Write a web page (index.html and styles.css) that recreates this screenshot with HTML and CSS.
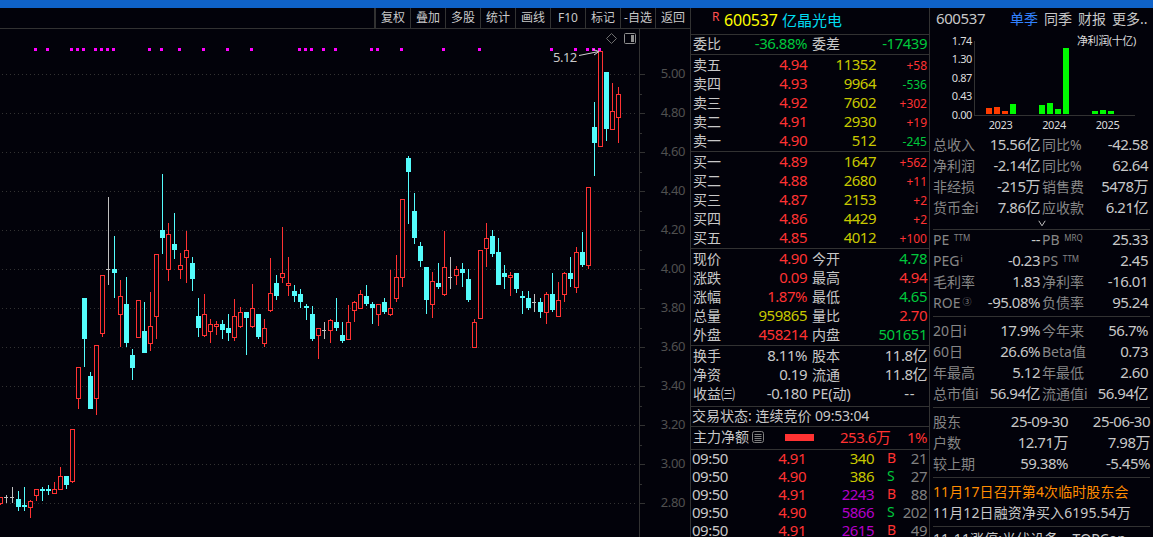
FILE: index.html
```html
<!DOCTYPE html>
<html lang="zh-CN">
<head>
  <meta charset="UTF-8">
  <title>600537 亿晶光电</title>
  <link rel="stylesheet" href="styles.css">
</head>
<body>

  <div class="titlebar"></div>

  <div class="main">

    <!-- K-line area -->
    <div class="kline">
      <div class="toolbar">
        <span>复权</span>
        <span>叠加</span>
        <span>多股</span>
        <span>统计</span>
        <span>画线</span>
        <span>F10</span>
        <span>标记</span>
        <span>-自选</span>
        <span>返回</span>
      </div>
      <svg id="kline-chart" class="kline-chart" width="690" height="508" viewBox="0 29 690 508"></svg>
    </div>

    <!-- Order book and quote -->
    <div class="quote">
      <div class="stock-title"><sup>R</sup><span class="code">600537</span><span class="name">亿晶光电</span></div>

      <div class="block ratio">
        <div class="row"><label>委比</label><b class="green">-36.88%</b><label>委差</label><b class="green">-17439</b></div>
      </div>

      <div class="block sell">
        <div class="row level"><label>卖五</label><b class="red">4.94</b><b class="yellow">11352</b><i class="red">+58</i></div>
        <div class="row level"><label>卖四</label><b class="red">4.93</b><b class="yellow">9964</b><i class="green">-536</i></div>
        <div class="row level"><label>卖三</label><b class="red">4.92</b><b class="yellow">7602</b><i class="red">+302</i></div>
        <div class="row level"><label>卖二</label><b class="red">4.91</b><b class="yellow">2930</b><i class="red">+19</i></div>
        <div class="row level"><label>卖一</label><b class="red">4.90</b><b class="yellow">512</b><i class="green">-245</i></div>
      </div>

      <div class="block buy">
        <div class="row level"><label>买一</label><b class="red">4.89</b><b class="yellow">1647</b><i class="red">+562</i></div>
        <div class="row level"><label>买二</label><b class="red">4.88</b><b class="yellow">2680</b><i class="red">+11</i></div>
        <div class="row level"><label>买三</label><b class="red">4.87</b><b class="yellow">2153</b><i class="red">+2</i></div>
        <div class="row level"><label>买四</label><b class="red">4.86</b><b class="yellow">4429</b><i class="red">+2</i></div>
        <div class="row level"><label>买五</label><b class="red">4.85</b><b class="yellow">4012</b><i class="red">+100</i></div>
      </div>

      <div class="block price">
        <div class="row"><label>现价</label><b class="red">4.90</b><label>今开</label><b class="green">4.78</b></div>
        <div class="row"><label>涨跌</label><b class="red">0.09</b><label>最高</label><b class="red">4.94</b></div>
        <div class="row"><label>涨幅</label><b class="red">1.87%</b><label>最低</label><b class="green">4.65</b></div>
        <div class="row"><label>总量</label><b class="yellow">959865</b><label>量比</label><b class="red">2.70</b></div>
        <div class="row"><label>外盘</label><b class="red">458214</b><label>内盘</label><b class="green">501651</b></div>
      </div>

      <div class="block share">
        <div class="row"><label>换手</label><b>8.11%</b><label>股本</label><b>11.8亿</b></div>
        <div class="row"><label>净资</label><b>0.19</b><label>流通</label><b>11.8亿</b></div>
        <div class="row"><label>收益㈢</label><b>-0.180</b><label>PE(动)</label><b class="empty">--</b></div>
      </div>

      <div class="block status">交易状态: 连续竞价 <span>09:53:04</span></div>

      <div class="block flow">
        <label>主力净额</label>
        <svg class="doc-icon" width="12" height="12" viewBox="0 0 12 12">
          <rect x="0.5" y="0.5" width="11" height="11" rx="2"/>
          <path d="M2.5 3.5h7M2.5 5.5h7M2.5 7.5h7M2.5 9.5h7"/>
        </svg>
        <div class="flow-bar"></div>
        <b class="red amount">253.6万</b>
        <b class="red">1%</b>
      </div>

      <div class="ticks">
        <div class="tick"><b>09:50</b><b class="red">4.91</b><b class="yellow">340</b><i class="red">B</i><b class="gray">21</b></div>
        <div class="tick"><b>09:50</b><b class="red">4.90</b><b class="yellow">386</b><i class="green">S</i><b class="gray">27</b></div>
        <div class="tick"><b>09:50</b><b class="red">4.91</b><b class="purple">2243</b><i class="red">B</i><b class="gray">88</b></div>
        <div class="tick"><b>09:50</b><b class="red">4.90</b><b class="purple">5866</b><i class="green">S</i><b class="gray">202</b></div>
        <div class="tick"><b>09:50</b><b class="red">4.91</b><b class="purple">2615</b><i class="red">B</i><b class="gray">49</b></div>
      </div>
    </div>

    <!-- Financials -->
    <div class="finance">
      <div class="tabs"><b>600537</b><span class="active">单季</span><span>同季</span><span>财报</span><span>更多..</span></div>

      <svg id="profit-chart" class="profit-chart" width="223" height="104" viewBox="930 30 223 104"></svg>

      <div class="fin-block income">
        <div class="fin-row"><label>总收入</label><b>15.56亿</b><label>同比%</label><b>-42.58</b></div>
        <div class="fin-row"><label>净利润</label><b>-2.14亿</b><label>同比%</label><b>62.64</b></div>
        <div class="fin-row"><label>非经损</label><b>-215万</b><label>销售费</label><b>5478万</b></div>
        <div class="fin-row"><label>货币金i</label><b>7.86亿</b><label>应收款</label><b>6.21亿</b></div>
        <svg class="more" width="8" height="7" viewBox="0 0 8 7"><path d="M0.8 0.8L4 5.8L7.2 0.8"/></svg>
      </div>

      <div class="fin-block valuation">
        <div class="fin-row"><label>PE <sup>TTM</sup></label><b>--</b><label>PB <sup>MRQ</sup></label><b>25.33</b></div>
        <div class="fin-row"><label>PEG<sup>i</sup></label><b>-0.23</b><label>PS <sup>TTM</sup></label><b>2.45</b></div>
        <div class="fin-row"><label>毛利率</label><b>1.83</b><label>净利率</label><b>-16.01</b></div>
        <div class="fin-row"><label>ROE<sup class="circle">③</sup></label><b>-95.08%</b><label>负债率</label><b>95.24</b></div>
      </div>

      <div class="fin-block">
        <div class="fin-row"><label>20日i</label><b>17.9%</b><label>今年来</label><b>56.7%</b></div>
        <div class="fin-row"><label>60日</label><b>26.6%</b><label>Beta值</label><b>0.73</b></div>
        <div class="fin-row"><label>年最高</label><b>5.12</b><label>年最低</label><b>2.60</b></div>
        <div class="fin-row"><label>总市值i</label><b>56.94亿</b><label>流通值i</label><b>56.94亿</b></div>
      </div>

      <div class="fin-block holders">
        <div class="fin-row"><label>股东</label><b>25-09-30</b><b>25-06-30</b></div>
        <div class="fin-row"><label>户数</label><b>12.71万</b><b>7.98万</b></div>
        <div class="fin-row"><label>较上期</label><b>59.38%</b><b>-5.45%</b></div>
      </div>

      <div class="fin-block news">
        <div class="notice">11月17日召开第4次临时股东会</div>
        <div>11月12日融资净买入6195.54万</div>
      </div>

      <div class="fin-block news last">
        <div>11-11涨停:光伏设备、TOPCon</div>
      </div>
    </div>

  </div>

  <script>
    // Candles, one every 6px: [type, high, body top, body bottom, low]
    // r = up, c = down, d = flat
    const candles = [
      ["r",497,497,504,505], ["d",495,497,498,503], ["d",487,497,498,503], ["c",491,499,507,511],
      ["c",487,505,507,511], ["r",500,501,508,518], ["r",489,489,496,501], ["c",487,489,491,501],
      ["c",485,489,491,495], ["r",482,489,494,494], ["r",467,476,490,490], ["c",476,476,485,489],
      ["r",429,429,482,483], ["r",367,367,399,409], ["c",298,298,339,367], ["c",372,376,409,409],
      ["r",345,345,399,415], ["r",275,275,334,337], ["d",197,269,270,285], ["c",236,269,273,298],
      ["r",280,296,315,347], ["c",277,304,343,347], ["c",349,355,368,380], ["r",300,300,338,338],
      ["c",302,331,353,353], ["r",292,326,344,351], ["r",254,254,317,339], ["c",174,230,238,254],
      ["r",223,234,270,281], ["c",213,244,250,259], ["r",253,265,270,279], ["r",231,250,258,283],
      ["c",257,263,279,291], ["c",298,316,328,337], ["r",294,314,336,337], ["r",319,324,332,343],
      ["r",321,324,327,335], ["c",320,324,330,339], ["c",314,328,333,341], ["r",299,316,338,341],
      ["r",307,312,327,328], ["c",312,312,318,355], ["r",284,308,327,328], ["c",314,314,337,339],
      ["r",319,328,344,347], ["r",258,293,311,312], ["c",275,283,296,300], ["r",227,273,278,283],
      ["r",257,283,286,296], ["c",285,291,296,302], ["c",289,294,302,308], ["c",304,306,308,320],
      ["c",306,314,339,341], ["r",328,328,336,359], ["d",322,330,331,339], ["r",319,320,331,343],
      ["c",298,322,328,331], ["c",322,335,341,343], ["r",305,322,340,340], ["r",301,302,311,322],
      ["r",290,294,309,309], ["c",285,296,304,306], ["c",302,304,308,324], ["r",304,304,315,326],
      ["c",298,302,312,314], ["r",270,308,315,316], ["r",255,277,299,302], ["r",199,199,278,287],
      ["c",156,158,172,224], ["c",193,211,238,244], ["c",242,246,261,267], ["c",267,267,300,314],
      ["r",272,281,305,318], ["c",263,283,287,289], ["r",231,267,295,296], ["d",257,277,278,289],
      ["r",266,269,276,285], ["c",263,269,273,287], ["c",269,279,300,302], ["r",319,322,348,348],
      ["r",250,250,319,319], ["r",223,238,249,267], ["c",230,236,254,257], ["c",238,252,285,285],
      ["c",265,273,277,289], ["r",272,275,278,296], ["c",273,273,289,293], ["c",291,296,298,314],
      ["c",291,298,308,310], ["d",294,302,303,312], ["c",298,302,312,318], ["r",292,294,313,324],
      ["c",273,294,310,312], ["r",282,300,317,317], ["r",272,273,295,302], ["c",257,273,279,287],
      ["r",247,252,288,293], ["c",232,252,265,267], ["r",187,187,266,269], ["c",102,127,143,176],
      ["r",51,51,147,147], ["c",72,72,129,141], ["r",83,111,130,130], ["r",87,94,118,143]
    ];

    // Event markers above the candles
    const markers = [34,46,70,76,82,94,100,106,112,148,160,178,202,226,250,298,304,310,
      322,334,370,376,400,442,478,550,574,586,592,598];

    function rect(cls, x, y, w, h) {
      return `<rect class="${cls}" x="${x}" y="${y}" width="${w}" height="${h}"/>`;
    }

    function drawKline() {
      let out = "";

      // Grid and price scale
      for (let i = 0; i < 12; i++) {
        const y = 74 + i * 39;
        out += `<line class="grid" x1="2" y1="${y + 0.5}" x2="636" y2="${y + 0.5}"/>`;
        out += rect("axis", 640, y, 5, 1);
        if (i < 11) out += rect("axis", 640, y + 20, 2, 1);
        out += `<text class="scale" x="685" y="${y + 4}">${(5 - i * 0.2).toFixed(2)}</text>`;
      }
      out += rect("axis", 639, 29, 1, 508);

      candles.forEach(([type, high, top, bottom, low], i) => {
        const x = i * 6;
        if (type === "r") {
          out += rect("up", x, high, 1, top - high) + rect("up", x, bottom, 1, low - bottom);
          out += `<rect class="up-body" x="${x - 1.5}" y="${top + 0.5}" width="4" height="${bottom - top - 1}"/>`;
        } else {
          const cls = type === "c" ? "down" : "flat";
          out += rect(cls, x, high, 1, low - high) + rect(cls, x - 2, top, type === "c" ? 5 : 4, bottom - top);
        }
      });

      markers.forEach(x => {
        out += rect("marker", x, 48, 3, 3);
      });

      // Highest price label with arrow
      out += `<text class="peak" x="553" y="62">5.12</text>`;
      out += `<path class="arrow" d="M579 55.5L599 51.5M593 49.5L599 51.5L594 55"/>`;

      // Corner buttons
      out += `<path class="tool" d="M611.5 33.5L616.5 38.5L611.5 43.5L606.5 38.5Z"/>`;
      out += `<rect class="tool panel" x="624.5" y="33.5" width="11" height="10" rx="1"/>`;
      out += rect("tool-fill", 631, 35, 3, 7);

      document.getElementById("kline-chart").innerHTML = out;
    }

    // Profit bars: [x, top, color]
    const profit = [
      [986,108,"loss"], [994,107,"loss"], [1002,111,"loss"], [1010,104,"gain"],
      [1039,105,"gain"], [1047,103,"gain"], [1055,109,"gain"], [1063,48,"gain"],
      [1092,111,"gain"], [1100,110,"gain"], [1108,111,"gain"]
    ];

    function drawProfit() {
      let out = rect("axis", 974, 41, 1, 75) + rect("axis", 974, 115, 161, 1);
      ["1.74", "1.30", "0.87", "0.43", "0.00"].forEach((label, i) => {
        out += `<text class="y-label" x="972" y="${44.5 + i * 18.5}">${label}</text>`;
      });
      ["2023", "2024", "2025"].forEach((year, i) => {
        out += `<text class="x-label" x="${1000.5 + i * 53.5}" y="129">${year}</text>`;
      });
      out += `<text class="legend" x="1077" y="44.5">净利润(十亿)</text>`;
      profit.forEach(([x, top, cls]) => {
        out += rect(cls, x, top, 6, 114 - top);
      });
      document.getElementById("profit-chart").innerHTML = out;
    }

    drawKline();
    drawProfit();
  </script>

</body>
</html>
```

FILE: styles.css
```css
* {
  box-sizing: border-box;
}

body {
  margin: 0;
  height: 537px;
  overflow: hidden;
  background-color: #02020a;
  color: #c8c8c8;
  font-family: "Noto Sans", "Noto Sans CJK SC", sans-serif;
  font-size: 14px;
}

b, i {
  font-weight: normal;
  font-style: normal;
}

b {
  font-size: 15px;
  letter-spacing: -0.5px;
}

.titlebar {
  height: 8px;
  background-color: #0f62c8;
}

.main {
  display: grid;
  grid-template-columns: 690px 240px 223px;
  height: 529px;
}

/* Text colors */
.red { color: #ff3232; }
.green { color: #00c83c; }
.yellow { color: #c8c800; }
.purple { color: #b400c8; }
.gray { color: #808080; }

/* Toolbar over the chart */
.toolbar {
  display: flex;
  justify-content: flex-end;
  height: 21px;
  border-bottom: 1px solid #323232;
}

.toolbar span {
  width: 35px;
  border-left: 1px solid #323232;
  font-size: 12px;
  line-height: 19px;
  text-align: center;
  white-space: nowrap;
}

.toolbar span:first-child {
  width: 36px;
  border-left-width: 2px;
}

/* K-line chart */
.kline-chart {
  display: block;
}

.grid {
  stroke: #323232;
  stroke-dasharray: 1 3;
}

.axis { fill: #323232; }
.up { fill: #ff3232; }
.up-body { fill: #02020a; stroke: #ff3232; }
.down { fill: #54fcfc; }
.flat { fill: #c0c0c0; }
.marker { fill: #ff00ff; }

.scale {
  fill: #505050;
  font-size: 13px;
  letter-spacing: -0.4px;
  text-anchor: end;
}

.peak {
  fill: #c8c8c8;
  font-size: 13px;
  letter-spacing: -0.5px;
}

.arrow {
  fill: none;
  stroke: #d0d0d0;
}

.tool {
  fill: none;
  stroke: #6e6e6e;
}

.panel { stroke: #909090; }
.tool-fill { fill: #909090; }

/* Quote column */
.quote {
  border-left: 1px solid #323232;
  border-right: 1px solid #323232;
}

.stock-title {
  display: flex;
  height: 27px;
  padding-left: 21px;
  border-bottom: 1px solid #323232;
  line-height: 25px;
}

.stock-title sup {
  width: 12px;
  color: #ff5050;
  font-size: 12px;
  line-height: 18px;
}

.stock-title .code {
  width: 58px;
  color: #ffff00;
  font-size: 16px;
  letter-spacing: -0.2px;
}

.stock-title .name {
  color: #00dcf0;
  font-size: 15px;
}

.block {
  padding: 1px 2px 0;
  border-bottom: 1px solid #323232;
}

.row {
  display: grid;
  grid-template-columns: 40px 74px 45px 75px;
  height: 19px;
  line-height: 17px;
  white-space: nowrap;
}

.row b, .row i {
  text-align: right;
}

.row label + b + label {
  padding-left: 5px;
}

.level {
  grid-template-columns: 40px 74px 69px 51px;
}

.level i {
  font-size: 12px;
  line-height: 19px;
}

.ratio {
  height: 20px;
  padding-top: 0;
}

.sell, .buy, .price {
  height: 97px;
}

.share {
  height: 61px;
}

.row .empty {
  padding-right: 12px;
  letter-spacing: 0.5px;
}

.status {
  height: 20px;
  padding: 0 1px;
  line-height: 18px;
}

.status span {
  letter-spacing: -0.2px;
}

.flow {
  display: flex;
  align-items: center;
  height: 23px;
  padding: 0 2px 2px;
  line-height: 20px;
}

.doc-icon {
  margin-left: 3px;
  fill: none;
  stroke: #808080;
}

.flow-bar {
  width: 29px;
  height: 7px;
  margin-left: 21px;
  background-color: #ff3232;
}

.flow b {
  margin-left: auto;
}

.flow .amount {
  margin-left: 26px;
}

.tick {
  display: grid;
  grid-template-columns: 50px 64px 68px 34px 19px;
  height: 18px;
  padding-left: 1px;
  line-height: 16px;
}

.tick b {
  display: flex;
  justify-content: flex-end;
}

.tick b:first-child {
  justify-content: flex-start;
}

.tick i {
  padding-left: 13px;
  font-size: 14px;
}

/* Finance column */
.tabs {
  display: flex;
  gap: 6px;
  height: 22px;
  padding-left: 6px;
  line-height: 21px;
  white-space: nowrap;
}

.tabs b {
  width: 68px;
  letter-spacing: -0.4px;
}

.tabs .active {
  color: #3282ff;
}

.profit-chart {
  display: block;
}

.profit-chart text {
  fill: #dcdcdc;
  font-size: 11px;
  letter-spacing: -0.4px;
}

.profit-chart .y-label { text-anchor: end; }
.profit-chart .x-label { text-anchor: middle; }
.loss { fill: #ff3c00; }
.gain { fill: #00fa00; }

.fin-block {
  margin: 0 3px;
  padding: 4px 0 2px;
  border-bottom: 1px solid #323232;
}

.fin-row {
  display: grid;
  grid-template-columns: 50px 57px 50px 58px;
  height: 21px;
  padding-right: 2px;
  line-height: 19px;
  white-space: nowrap;
}

.fin-row label {
  color: #868686;
}

.fin-row b {
  display: flex;
  justify-content: flex-end;
}

.fin-row label + b + label {
  padding-left: 2px;
}

.fin-row sup {
  margin-left: 1px;
  font-size: 8px;
  line-height: 0;
  vertical-align: 4px;
}

.fin-row .circle {
  margin-left: 2px;
  font-size: 9px;
  vertical-align: 3px;
}

.income {
  height: 96px;
  padding: 1px 0 0;
}

.more {
  display: block;
  margin: 1px auto 0;
  fill: none;
  stroke: #c0c0c0;
}

.valuation {
  padding-top: 0;
}

.holders .fin-row {
  grid-template-columns: 50px 85px 82px;
  padding-right: 0;
}

.news {
  height: 49px;
  padding-top: 3px;
  letter-spacing: 0.1px;
  line-height: 21px;
  white-space: nowrap;
}

.notice {
  color: #ff8c00;
}

.last {
  padding-top: 1px;
  border-bottom: none;
}
```
